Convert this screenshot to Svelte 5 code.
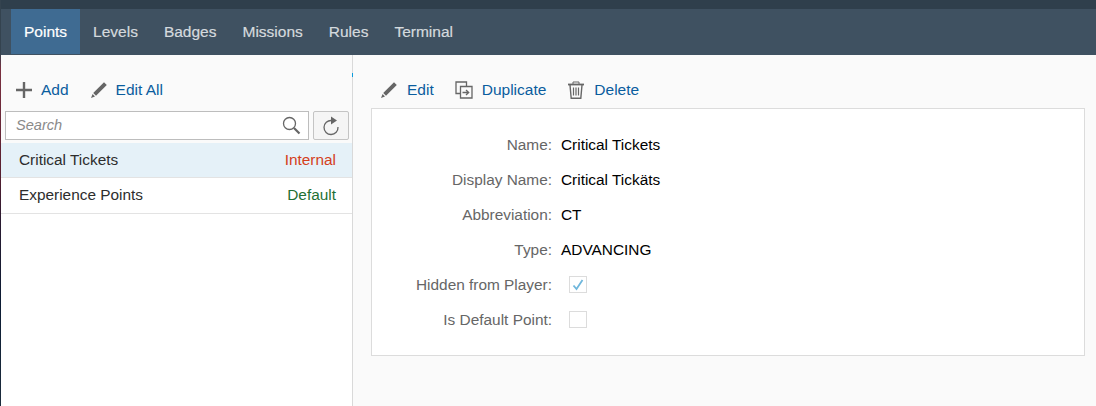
<script>
  const tabs = ['Points', 'Levels', 'Badges', 'Missions', 'Rules', 'Terminal'];
  const points = [
    { name: 'Critical Tickets', tag: 'Internal', tone: 'internal', selected: true },
    { name: 'Experience Points', tag: 'Default', tone: 'default', selected: false }
  ];
  const fields = [
    { label: 'Name:', value: 'Critical Tickets' },
    { label: 'Display Name:', value: 'Critical Tickäts' },
    { label: 'Abbreviation:', value: 'CT' },
    { label: 'Type:', value: 'ADVANCING' },
    { label: 'Hidden from Player:', check: true },
    { label: 'Is Default Point:', check: false }
  ];
</script>

<div class="page">
  <div class="topbar"></div>
  <nav class="tabs">
    {#each tabs as tab, i}
      <span class="tab" class:active={i === 0}>{tab}</span>
    {/each}
  </nav>

  <div class="main">
    <aside class="side">
      <div class="tick"></div>
      <div class="toolbar side-tools">
        <button class="action">
          <svg width="18" height="18" viewBox="0 0 18 18"><path d="M7.800 1h2.400v6.800H17v2.400h-6.800V17H7.800v-6.800H1V7.800h6.800z" fill="#666" /></svg>
          Add
        </button>
        <button class="action">
          <svg width="18" height="18" viewBox="0 0 18 18"><path d="M14 1.200l2.800 2.800L6 14.800 3.200 12zM2.600 13l2.400 2.400L1 17z" fill="#666" /></svg>
          Edit All
        </button>
      </div>
      <div class="search-row">
        <div class="search">
          <span class="placeholder">Search</span>
          <svg width="19" height="19" viewBox="0 0 19 19" fill="none" stroke="#666"><circle cx="7.500" cy="7.500" r="6" stroke-width="1.300" /><path d="M12 12l5.500 5.500" stroke-width="2.200" /></svg>
        </div>
        <button class="refresh" aria-label="Refresh">
          <svg width="18" height="20" viewBox="0 0 18 20" fill="none"><path d="M9.500 4.500A7 7 0 1 0 16 11" stroke="#666" stroke-width="1.300" /><path d="M9 0.500l6 4-6 4z" fill="#666" /></svg>
        </button>
      </div>
      <ul class="list">
        {#each points as p}
          <li class:selected={p.selected}>
            <span>{p.name}</span>
            <span class={p.tone}>{p.tag}</span>
          </li>
        {/each}
      </ul>
    </aside>

    <section class="detail">
      <div class="toolbar detail-tools">
        <button class="action">
          <svg width="18" height="18" viewBox="0 0 18 18"><path d="M14 1.200l2.800 2.800L6 14.800 3.200 12zM2.600 13l2.400 2.400L1 17z" fill="#666" /></svg>
          Edit
        </button>
        <button class="action">
          <svg width="18" height="18" viewBox="0 0 18 18" fill="none" stroke="#666" stroke-width="1.300"><path d="M5.500 12.500H1V1h10.500v4.500" /><path d="M5.500 5.500H17V17H5.500z" /><path d="M7.500 11.500h6M11 9l2.700 2.500L11 14" /></svg>
          Duplicate
        </button>
        <button class="action">
          <svg width="18" height="18" viewBox="0 0 18 18" fill="none" stroke="#666"><path d="M1 3.500h16" stroke-width="1.800" /><path d="M6 3V1h6v2" /><path d="M3 4l1.200 13.300h9.600L15 4" stroke-width="1.400" /><path d="M6.500 6.500v8M9 6.500v8M11.500 6.500v8" stroke-width="1.200" /></svg>
          Delete
        </button>
      </div>
      <div class="card">
        {#each fields as f}
          <div class="label">{f.label}</div>
          {#if f.value}
            <div class="value">{f.value}</div>
          {:else}
            <div class="value">
              <span class="box">
                {#if f.check}
                  <svg width="14" height="14" viewBox="0 0 14 14" fill="none"><path d="M2.500 7.500l3 3.500L11.500 2" stroke="#6fb7dc" stroke-width="1.800" /></svg>
                {/if}
              </span>
            </div>
          {/if}
        {/each}
      </div>
    </section>
  </div>
</div>

<style>
  :global(body) {
    margin: 0;
  }

  .page {
    height: 406px;
    display: flex;
    flex-direction: column;
    font-family: "Liberation Sans", Arial, sans-serif;
    font-size: 15.4px;
    overflow: hidden;
    background: #fafafa;
    border-left: 1px solid;
    border-image: linear-gradient(#34434f 0, #34434f 54px, #7a3040 70px, #5a2030 170px, #2a1a30 220px, #0c1c34 300px, #1c2c3c 406px) 1;
  }

  .topbar {
    height: 9px;
    background: #2f3f4c;
  }

  .tabs {
    height: 46px;
    display: flex;
    padding-left: 10px;
    background: #3f5161;
  }

  .tab {
    display: flex;
    align-items: center;
    padding: 0 13px;
    margin-bottom: 1px;
    color: #d5dade;
    font-size: 15.5px;
    -webkit-text-stroke: 0.2px currentColor;
  }

  .tab.active {
    background: #3f6b92;
    color: #fff;
  }

  .main {
    flex: 1;
    display: flex;
    min-height: 0;
  }

  .side {
    position: relative;
    width: 351px;
    flex-shrink: 0;
    background: #fff;
    border-right: 1px solid #d9d9d9;
  }

  .tick {
    position: absolute;
    top: 18px;
    right: -1px;
    width: 1px;
    height: 4px;
    background: #0a9bdc;
  }

  .toolbar {
    display: flex;
    background: #fafafa;
  }

  .side-tools {
    height: 56px;
    padding: 25px 0 0 14px;
    box-sizing: border-box;
    gap: 21px;
  }

  .side-tools .action {
    gap: 8px;
  }

  .detail-tools {
    height: 53px;
    margin-left: -18px;
    padding: 25px 0 0 27px;
    box-sizing: border-box;
    gap: 21px;
  }

  .action {
    display: flex;
    align-items: center;
    gap: 9px;
    height: 20px;
    padding: 0;
    border: 0;
    background: none;
    color: #0a5d9e;
    font: inherit;
    font-size: 15.5px;
  }

  .search-row {
    display: flex;
    gap: 4px;
    padding: 0 3px 3px 4px;
    background: #fafafa;
  }

  .search {
    width: 304px;
    height: 29px;
    box-sizing: border-box;
    display: flex;
    align-items: center;
    justify-content: space-between;
    padding: 0 7px 2px 10px;
    background: #fff;
    border: 1px solid #bdbdbd;
  }

  .search svg {
    margin-top: 2px;
  }

  .placeholder {
    color: #8a8a8a;
    font-size: 14.6px;
    font-style: italic;
  }

  .refresh {
    width: 36px;
    height: 29px;
    box-sizing: border-box;
    display: flex;
    align-items: center;
    justify-content: center;
    padding: 0;
    background: #f5f5f5;
    border: 1px solid #c4c4c4;
    border-radius: 2px;
  }

  .list {
    margin: 0;
    padding: 0;
    list-style: none;
    color: #2d2d2d;
  }

  .list li {
    height: 35px;
    box-sizing: border-box;
    display: flex;
    align-items: center;
    justify-content: space-between;
    padding: 0 16px 0 18px;
    border-bottom: 1px solid #e3e3e3;
  }

  .list li + li {
    height: 36px;
    padding-bottom: 1px;
  }

  .list li.selected {
    background: #e5f1f8;
  }

  .internal {
    color: #d4401c;
  }

  .default {
    color: #1f7034;
  }

  .detail {
    flex: 1;
    padding: 0 11px 0 18px;
  }

  .card {
    height: 248px;
    box-sizing: border-box;
    display: grid;
    grid-template-columns: 180px 1fr;
    grid-auto-rows: 35px;
    column-gap: 9px;
    align-items: center;
    padding-top: 18px;
    background: #fff;
    border: 1px solid #dcdcdc;
  }

  .label {
    text-align: right;
    color: #666;
  }

  .value {
    color: #000;
    display: flex;
  }

  .box {
    width: 18px;
    height: 17px;
    box-sizing: border-box;
    display: flex;
    align-items: center;
    justify-content: center;
    background: #fff;
    border: 1.5px solid #dcdcdc;
    margin-left: 8px;
  }
</style>
